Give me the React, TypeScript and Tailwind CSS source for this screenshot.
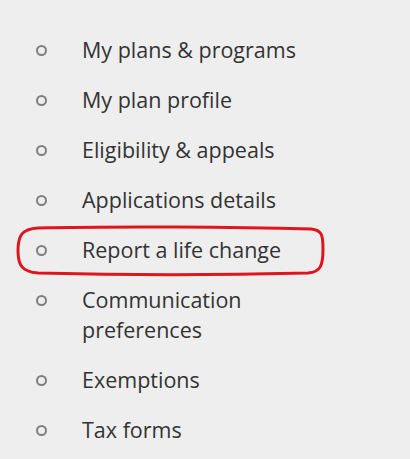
const items = [
  'My plans & programs',
  'My plan profile',
  'Eligibility & appeals',
  'Applications details',
  'Report a life change',
  'Communication preferences',
  'Exemptions',
  'Tax forms',
];

export default function App() {
  return (
    <div
      className="h-[459px] w-[410px] overflow-hidden bg-[#eeeeee] text-[#333333]"
      style={{ fontFamily: '"Open Sans", Arial, sans-serif' }}
    >
      <ul className="flex flex-col gap-5 pt-[35px] pr-4">
        {items.map((label, i) => (
          <li key={label} className="relative flex items-start">
            <span className="flex h-[30px] w-[82px] shrink-0 items-center justify-center">
              <span className="block h-[11px] w-[11px] rounded-full border-2 border-[#7f7f7f]" />
            </span>
            <span className="max-w-[240px] text-[21.5px] leading-[30px]">{label}</span>
            {i === 4 && (
              <svg
                className="pointer-events-none absolute left-[16px] top-[-10px]"
                width="310"
                height="52"
                viewBox="0 0 310 52"
                fill="none"
              >
                <path
                  d="M22 3 C 100 1, 220 2, 295 4 C 306 5, 307 10, 307 24 C 307 40, 305 47, 292 48 C 210 50, 100 50, 22 48 C 6 47, 2 40, 2 26 C 2 10, 6 4, 22 3 Z"
                  stroke="#e0141c"
                  strokeWidth="3"
                />
              </svg>
            )}
          </li>
        ))}
      </ul>
    </div>
  );
}
